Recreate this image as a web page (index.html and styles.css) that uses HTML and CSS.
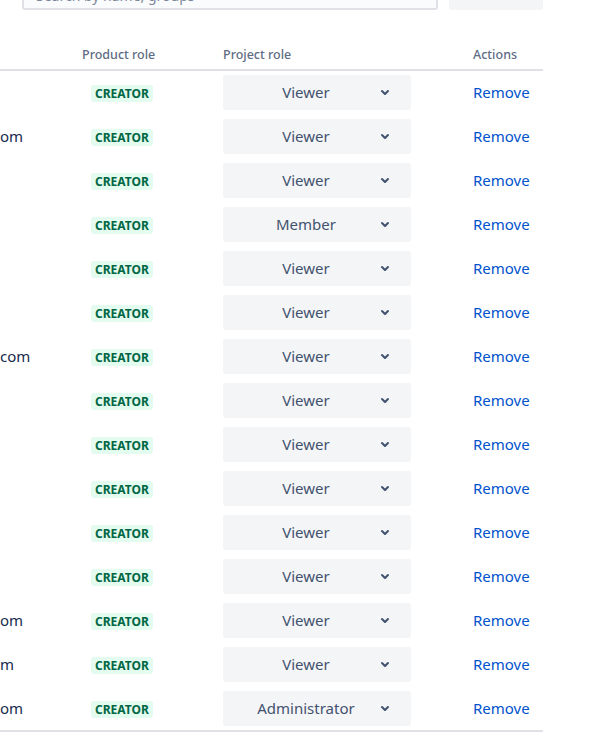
FILE: index.html
```html
<!DOCTYPE html>
<html lang="en">
<head>
    <meta charset="UTF-8">
    <title>People</title>
    <link rel="stylesheet" href="styles.css">
</head>
<body>
    <div id="app">
        <div class="toolbar">
            <div class="search">Search by name, groups</div>
            <button class="add-btn"></button>
        </div>

        <div class="people">
            <div class="row head">
                <div class="cell name"></div>
                <div class="cell">Product role</div>
                <div class="cell">Project role</div>
                <div class="cell">Actions</div>
            </div>
            <div id="rows"></div>
        </div>
    </div>

    <script>
        var people = [
            ['', 'Viewer'],
            ['om', 'Viewer'],
            ['', 'Viewer'],
            ['', 'Member'],
            ['', 'Viewer'],
            ['', 'Viewer'],
            ['com', 'Viewer'],
            ['', 'Viewer'],
            ['', 'Viewer'],
            ['', 'Viewer'],
            ['', 'Viewer'],
            ['', 'Viewer'],
            ['om', 'Viewer'],
            ['m', 'Viewer'],
            ['om', 'Administrator']
        ];

        var chevron = '<svg class="chevron" width="24" height="24" viewBox="0 0 24 24"><path fill="currentColor" d="M8.292 10.293a1.009 1.009 0 0 0 0 1.419l2.939 2.965c.218.215.5.322.779.322s.556-.107.769-.322l2.93-2.955a1.01 1.01 0 0 0 0-1.419.987.987 0 0 0-1.406 0l-2.298 2.317-2.307-2.327a.99.99 0 0 0-1.406 0z"/></svg>';

        var html = '';
        for (var i = 0; i < people.length; i++) {
            html += '<div class="row">'
                + '<div class="cell name">' + people[i][0] + '</div>'
                + '<div class="cell"><span class="lozenge">Creator</span></div>'
                + '<div class="cell"><div class="select"><span class="label">' + people[i][1] + '</span>' + chevron + '</div></div>'
                + '<div class="cell"><a href="#" class="remove">Remove</a></div>'
                + '</div>';
        }
        document.getElementById('rows').innerHTML = html;
    </script>
</body>
</html>
```

FILE: styles.css
```css
body {
    margin: 0;
    font-family: "Noto Sans", "Open Sans", Arial, sans-serif;
    color: #172b4d;
    background-color: white;
}

#app {
    width: 543px;
}

.toolbar {
    display: flex;
    margin-top: -30px;
    padding-left: 22px;
    gap: 11px;
}

.search {
    width: 416px;
    height: 40px;
    box-sizing: border-box;
    border: 2px solid #dfe1e6;
    border-radius: 3px;
    background-color: #fafbfc;
    color: #7a869a;
    font-size: 14px;
    line-height: 14px;
    padding: 17px 0 0 12px;
    overflow: hidden;
    white-space: nowrap;
}

.add-btn {
    width: 94px;
    height: 40px;
    border: none;
    border-radius: 3px;
    background-color: #f4f5f7;
}

.people {
    margin-top: 36px;
    border-bottom: 2px solid #dfe1e6;
}

#rows {
    margin-top: -1px;
}

.row {
    display: grid;
    grid-template-columns: 82px 141px 250px 70px;
    align-items: center;
    height: 44px;
}

.row.head {
    height: 16px;
    padding: 1px 0 6px;
    border-bottom: 2px solid #dfe1e6;
    font-weight: 500;
    line-height: 16px;
    color: #5e6c84;
}

.cell {
    font-size: 15px;
    white-space: nowrap;
}

.row.head .cell {
    font-size: 12.5px;
}

.name {
    color: #172b4d;
}

.lozenge {
    display: inline-block;
    margin-left: 9px;
    padding: 0 4px;
    border-radius: 3px;
    background-color: #e3fcef;
    color: #006644;
    font-size: 12px;
    font-weight: 700;
    line-height: 17px;
    text-transform: uppercase;
}

.select {
    display: flex;
    align-items: center;
    width: 188px;
    height: 35px;
    box-sizing: border-box;
    padding: 0 14px 0 16px;
    border-radius: 3px;
    background-color: #f4f5f7;
    color: #42526e;
}

.select .label {
    flex: 1;
    text-align: center;
}

.chevron {
    color: #42526e;
}

.remove {
    color: #0052cc;
    text-decoration: none;
}
```
